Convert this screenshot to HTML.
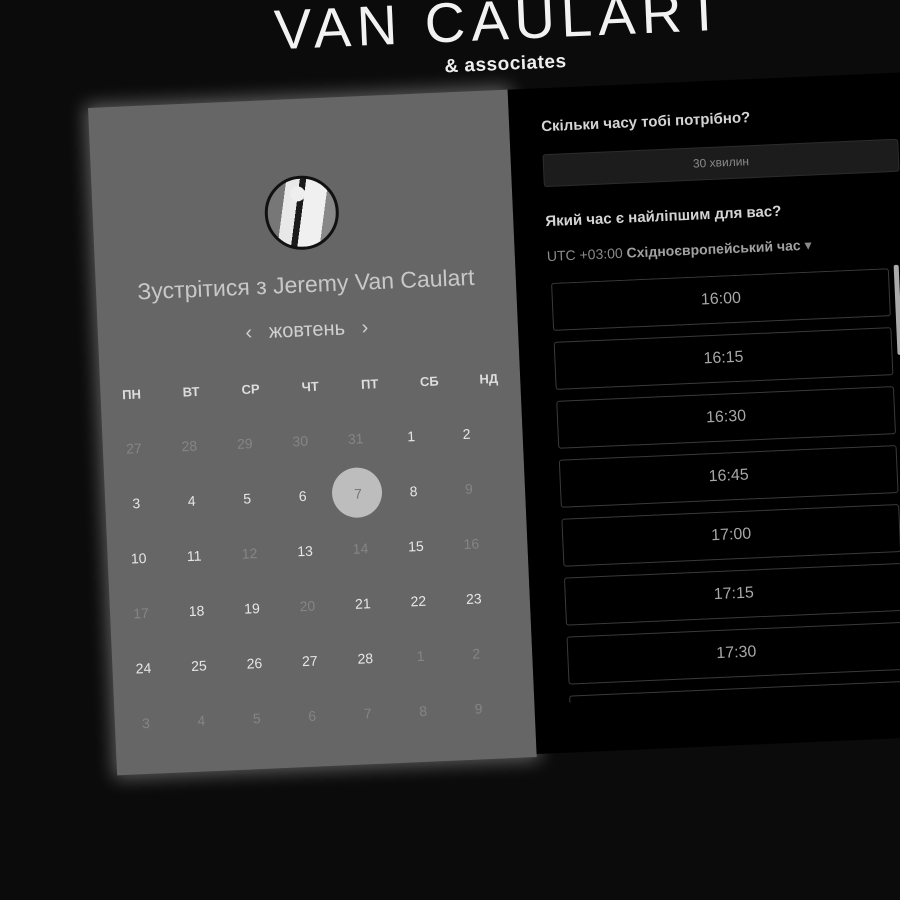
<!DOCTYPE html>
<html><head><meta charset="utf-8"><style>
html,body{margin:0;padding:0;width:900px;height:900px;overflow:hidden;background:#0b0b0b;font-family:"Liberation Sans","DejaVu Sans",sans-serif}
#w{position:absolute;left:88px;top:108px;width:0;height:0;transform:rotate(-2.5deg);transform-origin:0 0}
.a{position:absolute;white-space:nowrap}
#lp{left:0;top:0;width:420px;height:668px;background:#666;box-shadow:0 0 18px 3px rgba(255,255,255,.35)}
#rp{left:420px;top:0;width:500px;height:665px;background:#000}
.c{transform:translate(-50%,-50%)}
.d{font-size:14px;color:#e6e6e6}
.h{font-size:15px;color:#d4d4d4;font-weight:bold}
.slot{position:absolute;width:338px;height:48px;border:1px solid #3a3a3a;border-radius:3px;box-sizing:border-box;color:#a8a8a8;font-size:16px;text-align:center;line-height:46px}
</style></head><body>
<div id="w">
<div class="a c" style="left:416px;top:-70px;font-size:56px;color:#f2f2f2;letter-spacing:6px">VAN CAULART</div>
<div class="a c" style="left:419px;top:-25px;font-size:19px;color:#eee;font-weight:bold;letter-spacing:0.5px">&amp; associates</div>
<div class="a" id="lp"></div>
<div class="a" id="rp"></div>
<div class="a" style="left:172px;top:77px;width:74px;height:74px;border-radius:50%;border:3px solid #111;box-sizing:border-box;background:radial-gradient(circle at 45% 22%,#eee 0 11%,transparent 12%),linear-gradient(100deg,#777 0 25%,#e8e8e8 25% 42%,#1a1a1a 42% 50%,#f0f0f0 50% 78%,#888 78%);overflow:hidden"></div>
<div class="a c" style="left:210px;top:186px;font-size:23px;color:#c8c8c8">Зустрітися з Jeremy Van Caulart</div>
<div class="a c" style="left:209px;top:232px;font-size:20px;color:#d0d0d0">‹&nbsp;&nbsp;&nbsp;жовтень&nbsp;&nbsp;&nbsp;›</div>
<div class="a" style="left:227px;top:371px;width:50px;height:50px;border-radius:50%;background:#bdbdbd"></div>
<div id="cal"></div>
<div class="a h" style="left:452px;top:30px">Скільки часу тобі потрібно?</div>
<div class="a" style="left:452px;top:66px;width:356px;height:33px;background:#1c1c1c;border:1px solid #2c2c2c;border-radius:3px;box-sizing:border-box;color:#8a8a8a;font-size:12px;text-align:center;line-height:31px">30 хвилин</div>
<div class="a h" style="left:452px;top:125px">Який час є найліпшим для вас?</div>
<div class="a" style="left:452px;top:160px;font-size:14px;color:#8a8a8a">UTC +03:00 <b style="color:#a0a0a0">Східноєвропейський час</b> ▾</div>
<div class="a" style="left:440px;top:195px;width:470px;height:420px;overflow:hidden">
<div class="slot" style="left:15px;top:0">16:00</div>
<div class="slot" style="left:15px;top:59px">16:15</div>
<div class="slot" style="left:15px;top:118px">16:30</div>
<div class="slot" style="left:15px;top:177px">16:45</div>
<div class="slot" style="left:15px;top:236px">17:00</div>
<div class="slot" style="left:15px;top:295px">17:15</div>
<div class="slot" style="left:15px;top:354px">17:30</div>
<div class="slot" style="left:15px;top:413px">17:45</div>
</div>
<div class="a" style="left:798px;top:192px;width:5px;height:90px;background:#aaa;border-radius:2px"></div>
</div>
<script>
var cal=document.getElementById('cal'),h='';
var wd=['ПН','ВТ','СР','ЧТ','ПТ','СБ','НД'];
for(var i=0;i<7;i++)h+='<div class="a c d" style="left:'+(31+i*59.6)+'px;top:288px;font-size:13px;font-weight:bold;color:#ddd">'+wd[i]+'</div>';
var days=[[27,1],[28,1],[29,1],[30,1],[31,1],[1,0],[2,0],[3,0],[4,0],[5,0],[6,0],[7,2],[8,0],[9,1],[10,0],[11,0],[12,1],[13,0],[14,1],[15,0],[16,1],[17,1],[18,0],[19,0],[20,1],[21,0],[22,0],[23,0],[24,0],[25,0],[26,0],[27,0],[28,0],[1,1],[2,1],[3,1],[4,1],[5,1],[6,1],[7,1],[8,1],[9,1]];
for(var k=0;k<days.length;k++){var r=Math.floor(k/7),c=k%7,d=days[k];
h+='<div class="a c d" style="left:'+(31+c*55.5)+'px;top:'+(342+r*55)+'px;color:'+(d[1]==1?'#858585':d[1]==2?'#777':'#e6e6e6')+'">'+d[0]+'</div>';}
cal.outerHTML=h;
</script>
</body></html>
